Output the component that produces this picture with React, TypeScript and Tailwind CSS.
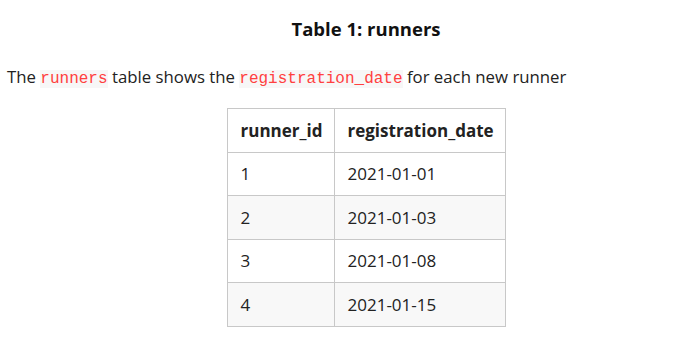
const rows = [
  { id: '1', date: '2021-01-01' },
  { id: '2', date: '2021-01-03' },
  { id: '3', date: '2021-01-08' },
  { id: '4', date: '2021-01-15' },
];

function Code({ children }: { children: string }) {
  return (
    <code className="bg-[#f7f7f7] text-[16px] leading-none text-[#ff4040] font-['Liberation_Mono',monospace]">
      {children}
    </code>
  );
}

export default function App() {
  return (
    <div className="w-[690px] h-[347px] bg-white font-['Open_Sans',sans-serif] text-[#222]">
      <h3 className="pt-[16px] pl-[42px] text-center text-[18.5px] leading-[26px] font-bold text-[#111]">
        Table 1: runners
      </h3>
      <p className="mt-[23px] pl-[7px] text-[16.8px] leading-[24px] text-[#222]">
        The <Code>runners</Code> table shows the <Code>registration_date</Code> for each new runner
      </p>
      <div className="pl-[42px] pt-[19px]">
        <table className="mx-auto w-[278px] table-fixed border-collapse text-[17px] text-[#222]">
          <colgroup>
            <col className="w-[107px]" />
            <col className="w-[171px]" />
          </colgroup>
          <thead>
            <tr>
              <th className="h-[43.6px] border border-[#c8c8c8] pl-[13px] text-left font-bold whitespace-nowrap">runner_id</th>
              <th className="h-[43.6px] border border-[#c8c8c8] pl-[13px] text-left font-bold whitespace-nowrap">registration_date</th>
            </tr>
          </thead>
          <tbody>
            {rows.map((r, i) => (
              <tr key={r.id} className={i % 2 === 1 ? 'bg-[#f8f8f8]' : 'bg-white'}>
                <td className="h-[43.6px] border border-[#c8c8c8] pl-[13px]">{r.id}</td>
                <td className="h-[43.6px] border border-[#c8c8c8] pl-[13px]">{r.date}</td>
              </tr>
            ))}
          </tbody>
        </table>
      </div>
    </div>
  );
}
